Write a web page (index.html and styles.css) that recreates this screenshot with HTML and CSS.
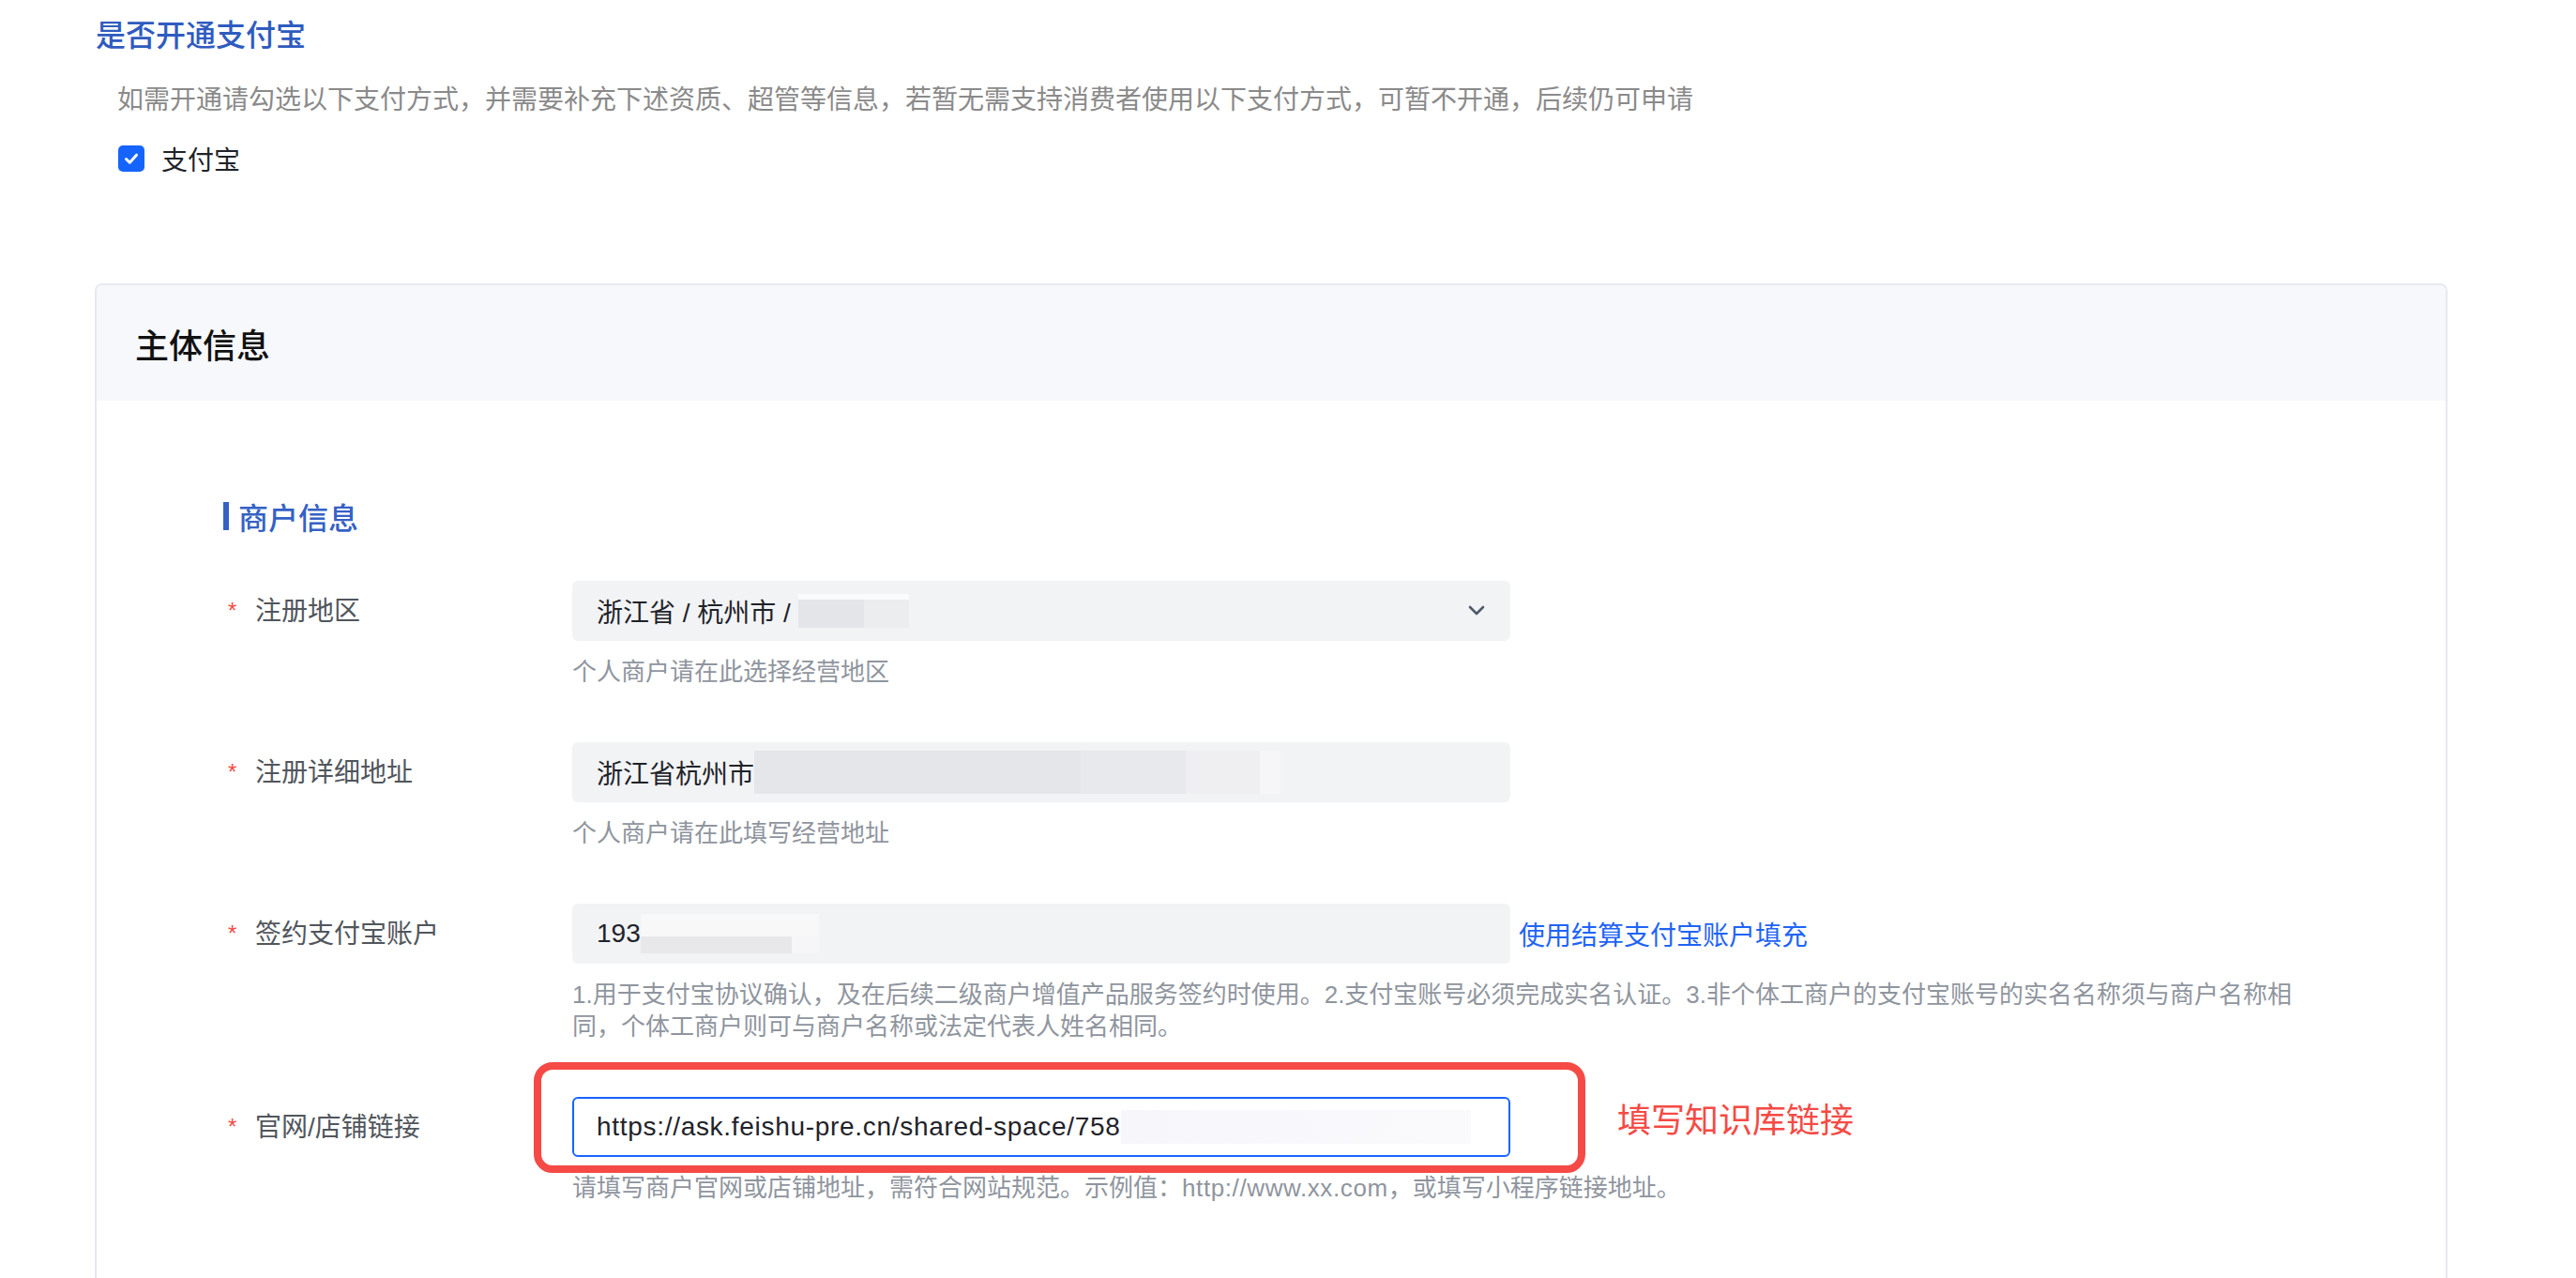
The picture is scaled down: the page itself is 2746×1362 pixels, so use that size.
FILE: index.html
```html
<!DOCTYPE html>
<html lang="zh-CN">
<head>
<meta charset="utf-8">
<title>主体信息</title>
<link rel="stylesheet" href="styles.css">
</head>
<body>
<div class="page">
  <h2 class="title">是否开通支付宝</h2>
  <p class="desc">如需开通请勾选以下支付方式，并需要补充下述资质、超管等信息，若暂无需支持消费者使用以下支付方式，可暂不开通，后续仍可申请</p>
  <label class="check-row">
    <span class="checkbox"><svg width="28" height="28" viewBox="0 0 28 28"><path d="M8.5 14.5 L12.3 18.2 L19.5 10.2" fill="none" stroke="#fff" stroke-width="3" stroke-linecap="round" stroke-linejoin="round"/></svg></span>
    <span>支付宝</span>
  </label>

  <section class="card">
    <div class="card-header">主体信息</div>
    <div class="card-body">
      <div class="section-title"><span class="bar"></span><span>商户信息</span></div>
      <div class="form">
        <div class="form-item">
          <div class="label"><span class="star">*</span>注册地区</div>
          <div class="control">
            <div class="input select">
              <span class="value">浙江省 / 杭州市 / <span class="blur blur-a"></span></span>
              <svg class="chevron" width="18" height="12" viewBox="0 0 18 12"><path d="M2 2 L9 9 L16 2" fill="none" stroke="#4e5969" stroke-width="2.6" stroke-linecap="round" stroke-linejoin="round"/></svg>
            </div>
            <div class="hint">个人商户请在此选择经营地区</div>
          </div>
        </div>

        <div class="form-item">
          <div class="label"><span class="star">*</span>注册详细地址</div>
          <div class="control">
            <div class="input"><span class="value">浙江省杭州市<span class="blur blur-b"></span></span></div>
            <div class="hint">个人商户请在此填写经营地址</div>
          </div>
        </div>

        <div class="form-item">
          <div class="label"><span class="star">*</span>签约支付宝账户</div>
          <div class="control">
            <div class="field-row">
              <div class="input"><span class="value">193<span class="blur blur-c"></span></span></div>
              <a class="link">使用结算支付宝账户填充</a>
            </div>
            <div class="hint">1.用于支付宝协议确认，及在后续二级商户增值产品服务签约时使用。2.支付宝账号必须完成实名认证。3.非个体工商户的支付宝账号的实名名称须与商户名称相<br>同，个体工商户则可与商户名称或法定代表人姓名相同。</div>
          </div>
        </div>

        <div class="form-item">
          <div class="label"><span class="star">*</span>官网/店铺链接</div>
          <div class="control annotated">
            <div class="input focus"><span class="value"><span class="url">https://ask.feishu-pre.cn/shared-space/758</span><span class="blur blur-d"></span></span></div>
            <div class="hint">请填写商户官网或店铺地址，需符合网站规范。示例值：<span class="latin">http://www.xx.com</span>，或填写小程序链接地址。</div>
            <div class="mark-box"></div>
            <div class="mark-text">填写知识库链接</div>
          </div>
        </div>
      </div>
    </div>
  </section>
</div>
</body>
</html>
```

FILE: styles.css
```css
html, body {
  margin: 0;
  padding: 0;
  background: #ffffff;
}

body {
  font-family: "Liberation Sans", "Noto Sans CJK SC", sans-serif;
  color: #1f2329;
}

.page {
  padding: 14px 137px 0 101px;
}

.title {
  margin: 0 0 0 1px;
  font-size: 32px;
  line-height: 48px;
  font-weight: 500;
  color: #2f5bbf;
}

.desc {
  margin: 23px 0 0 0;
  padding-left: 24px;
  font-size: 28px;
  line-height: 44px;
  color: #8a8a8a;
}

.check-row {
  margin-top: 18px;
  padding-left: 25px;
  height: 44px;
  display: flex;
  align-items: center;
  gap: 18px;
  font-size: 28px;
  color: #1f2329;
}

.checkbox {
  width: 28px;
  height: 28px;
  border-radius: 5px;
  background: #1664ff;
  display: flex;
  align-items: center;
  justify-content: center;
}

.checkbox svg {
  display: block;
}

.card {
  margin-top: 111px;
  border: 2px solid #e7e9f1;
  border-bottom: none;
  border-radius: 8px 8px 0 0;
  overflow: hidden;
}

.card-header {
  height: 123px;
  background: #f7f8fc;
  display: flex;
  align-items: center;
  padding-left: 41px;
  font-size: 36px;
  font-weight: 500;
  color: #111111;
}

.card-body {
  padding: 101px 0 200px 135px;
}

.section-title {
  height: 44px;
  display: flex;
  align-items: center;
  gap: 10px;
  font-size: 32px;
  font-weight: 500;
  color: #3561c5;
}

.section-title .bar {
  width: 6px;
  height: 30px;
  background: #3561c5;
}

.form {
  margin-top: 47px;
}

.form-item {
  display: flex;
  align-items: flex-start;
}

.form-item + .form-item {
  margin-top: 58px;
}

.label {
  width: 372px;
  flex: none;
  box-sizing: border-box;
  height: 64px;
  padding-left: 5px;
  padding-bottom: 5px;
  display: flex;
  align-items: center;
  font-size: 28px;
  color: #51565d;
}

.star {
  width: 29px;
  color: #f54a45;
  font-size: 24px;
  position: relative;
  top: 2px;
}

.control {
  flex: none;
}

.annotated {
  position: relative;
}

.field-row {
  display: flex;
  align-items: center;
  gap: 9px;
}

.input {
  width: 1000px;
  height: 64px;
  box-sizing: border-box;
  background: #f2f3f5;
  border-radius: 6px;
  padding: 0 26px;
  display: flex;
  align-items: center;
  font-size: 28px;
  color: #1f2329;
}

.input .value {
  display: flex;
  align-items: center;
  white-space: pre;
}

.url {
  letter-spacing: 0.7px;
}

.latin {
  letter-spacing: 0.6px;
}

.select {
  justify-content: space-between;
  padding-right: 27px;
}

.chevron {
  display: block;
}

.input.focus {
  background: #ffffff;
  border: 2px solid #1664ff;
  padding: 0 24px;
}

.blur {
  display: inline-block;
}

.blur-a {
  width: 118px;
  height: 36px;
  background-image: linear-gradient(to bottom, #fbfbfc 0, #fbfbfc 6px, transparent 6px), linear-gradient(to right, #e4e5e8 0, #e4e5e8 70px, #ecedef 70px, #ecedef 100%);
}

.blur-b {
  width: 561px;
  height: 46px;
  background: linear-gradient(to right, #e5e6e9 0, #e5e6e9 62%, #e8e9ec 62%, #e8e9ec 82%, #efeff2 82%, #efeff2 96%, #f6f6f8 96%);
}

.blur-c {
  width: 190px;
  height: 42px;
  background-image: linear-gradient(to bottom, #f8f8f9 0, #f8f8f9 24px, transparent 24px), linear-gradient(to right, #e8e8eb 0, #e8e8eb 85%, #f6f6f8 85%);
}

.blur-d {
  width: 373px;
  height: 36px;
  background: linear-gradient(to right, #f7f7fb 0, #fafafd 100%);
}

.link {
  font-size: 28px;
  color: #1f64f5;
  white-space: nowrap;
  cursor: pointer;
}

.hint {
  margin-top: 16px;
  font-size: 26px;
  line-height: 34px;
  color: #8f959e;
  white-space: nowrap;
}

.mark-box {
  position: absolute;
  left: -41px;
  top: -37px;
  width: 1121px;
  height: 118px;
  box-sizing: border-box;
  border: 8px solid #f54a45;
  border-radius: 20px;
  pointer-events: none;
}

.mark-text {
  position: absolute;
  left: 1114px;
  top: 1px;
  font-size: 36px;
  line-height: 50px;
  color: #f54a45;
  white-space: nowrap;
}
```
